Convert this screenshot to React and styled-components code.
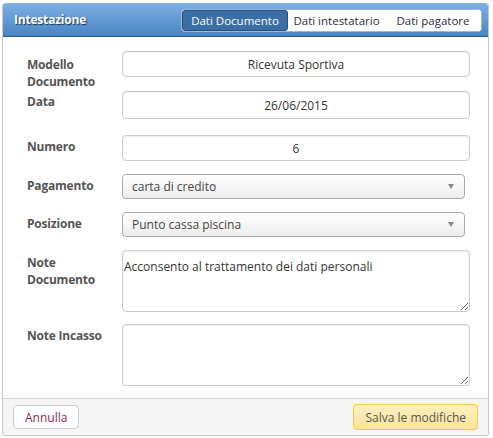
import React from 'react'
import styled, { createGlobalStyle } from 'styled-components';

const GlobalStyle = createGlobalStyle`
  body {
    margin: 0;
    background: #fff;
    font-family: "Open Sans", "Liberation Sans", sans-serif;
    font-size: 12px;
    color: #333;
  }
`

const Panel = styled.div`
  width: 485px;
  height: 432px;
  margin: 3px 0 0 2px;
  border: 1px solid #c8c8c8;
  border-top: none;
  border-radius: 3px;
  display: flex;
  flex-direction: column;
  overflow: hidden;
`

const Header = styled.div`
  height: 33px;
  display: flex;
  align-items: center;
  justify-content: space-between;
  padding: 0 6px 0 11px;
  background: linear-gradient(#7eb1e4, #4a84c3);
  border-bottom: 1px solid #2b5d92;
  border-radius: 3px 3px 0 0;
`

const Title = styled.h3`
  margin: 0;
  font-size: 12px;
  font-weight: bold;
  color: #fff;
  text-shadow: 1px 1px 1px #1f3550;
  letter-spacing: -0.2px;
`

const Tabs = styled.div`
  display: flex;
  height: 21px;
  border: 1px solid #9fb8d2;
  border-radius: 4px;
  background: #fff;
  overflow: hidden;
  margin-top: 1px;
`

const Tab = styled.div`
  display: flex;
  align-items: center;
  justify-content: center;
  width: ${p => p.$w}px;
  font-size: 11.5px;
  color: ${p => (p.$active ? '#fff' : '#2c2c3c')};
  background: ${p => (p.$active ? '#3b6ea6' : '#fff')};
  border: ${p => (p.$active ? '1px solid #27507c' : 'none')};
  border-radius: ${p => (p.$active ? '3px' : '0')};
`

const Body = styled.div`
  flex: 1;
  padding: 14px 18px 0 24px;
`

const Row = styled.div`
  display: flex;
  align-items: flex-start;
  height: ${p => p.$h}px;
`

const Label = styled.label`
  width: 95px;
  padding-top: ${p => p.$pt || 5}px;
  font-weight: bold;
  font-size: 12px;
  line-height: 17px;
  color: #555;
  letter-spacing: -0.2px;
`

const Input = styled.input`
  box-sizing: border-box;
  width: 348px;
  height: ${p => p.$h || 26}px;
  border: 1px solid #ccc;
  border-radius: 4px;
  box-shadow: inset 0 1px 2px rgba(0, 0, 0, 0.08);
  text-align: center;
  font-family: inherit;
  font-size: 12px;
  color: #333;
  outline: none;
`

const Select = styled.div`
  box-sizing: border-box;
  width: 343px;
  height: 25px;
  display: flex;
  align-items: center;
  justify-content: space-between;
  padding: 0 10px 0 9px;
  border: 1px solid #aaa;
  border-radius: 4px;
  background: linear-gradient(#fff 0%, #f6f6f6 50%, #ececec 100%);
  font-size: 12px;
  color: #444;
`

const Arrow = styled.span`
  width: 0;
  height: 0;
  border-left: 3.5px solid transparent;
  border-right: 3.5px solid transparent;
  border-top: 5px solid #888;
`

const Area = styled.textarea`
  box-sizing: border-box;
  width: 348px;
  height: 62px;
  padding: 7px 1px;
  border: 1px solid #ccc;
  border-radius: 4px;
  box-shadow: inset 0 1px 2px rgba(0, 0, 0, 0.08);
  font-family: inherit;
  font-size: 12px;
  color: #333;
  outline: none;
  resize: vertical;
`

const Footer = styled.div`
  height: 36px;
  display: flex;
  align-items: center;
  justify-content: space-between;
  padding: 0 10px 0 10px;
  background: #f5f5f5;
  border-top: 1px solid #d4d4d4;
`

const Button = styled.button`
  height: ${p => (p.$primary ? 26 : 24)}px;
  padding: 0 11px;
  font-family: inherit;
  font-size: 12px;
  border-radius: 4px;
  border: 1px solid ${p => (p.$primary ? '#f2cb54' : '#ccc')};
  background: ${p => (p.$primary ? 'linear-gradient(#fdf0bf, #fde39a)' : '#fff')};
  color: ${p => (p.$primary ? '#555' : '#8b2a52')};
`

const App = () => {
    return (
        <>
            <GlobalStyle />
            <Panel>
                <Header>
                    <Title>Intestazione</Title>
                    <Tabs>
                        <Tab $active $w={104}>Dati Documento</Tab>
                        <Tab $w={97}>Dati intestatario</Tab>
                        <Tab $w={96}>Dati pagatore</Tab>
                    </Tabs>
                </Header>
                <Body>
                    <Row $h={40}>
                        <Label>Modello<br />Documento</Label>
                        <Input defaultValue="Ricevuta Sportiva" />
                    </Row>
                    <Row $h={44}>
                        <Label $pt={2}>Data</Label>
                        <Input $h={28} defaultValue="26/06/2015" />
                    </Row>
                    <Row $h={39}>
                        <Label $pt={3}>Numero</Label>
                        <Input defaultValue="6" />
                    </Row>
                    <Row $h={38}>
                        <Label $pt={3}>Pagamento</Label>
                        <Select>carta di credito<Arrow /></Select>
                    </Row>
                    <Row $h={38}>
                        <Label $pt={3}>Posizione</Label>
                        <Select>Punto cassa piscina<Arrow /></Select>
                    </Row>
                    <Row $h={74}>
                        <Label $pt={4}>Note<br />Documento</Label>
                        <Area defaultValue="Acconsento al trattamento dei dati personali" />
                    </Row>
                    <Row $h={62}>
                        <Label $pt={3}>Note Incasso</Label>
                        <Area />
                    </Row>
                </Body>
                <Footer>
                    <Button>Annulla</Button>
                    <Button $primary>Salva le modifiche</Button>
                </Footer>
            </Panel>
        </>
    )
}

export default App;
